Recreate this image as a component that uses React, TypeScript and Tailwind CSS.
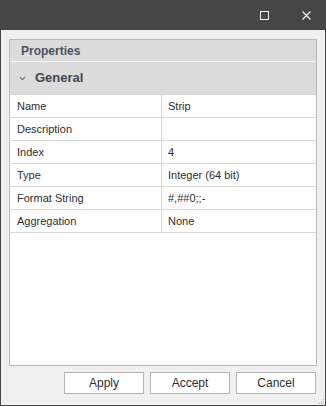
import { ChevronDown } from "lucide-react";

const rows = [
  { name: "Name", value: "Strip" },
  { name: "Description", value: "" },
  { name: "Index", value: "4" },
  { name: "Type", value: "Integer (64 bit)" },
  { name: "Format String", value: "#,##0;;-" },
  { name: "Aggregation", value: "None" },
];

export default function App() {
  return (
    <div
      className="relative w-[326px] h-[406px] flex flex-col bg-[#f0f0f0] border border-[#464646] text-[11px] text-[#2f2f2f]"
      style={{ fontFamily: '"Liberation Sans", Arial, sans-serif' }}
    >
      {/* title bar */}
      <div className="h-[29px] shrink-0 bg-[#464646] flex items-center justify-end pr-[14px] gap-[33px]">
        <div className="w-[9px] h-[9px] border border-[#f0f0f0]" />
        <svg width="9" height="9" viewBox="0 0 9 9" className="text-[#f0f0f0]">
          <path d="M0.5 0.5 L8.5 8.5 M8.5 0.5 L0.5 8.5" stroke="currentColor" strokeWidth="1.3" />
        </svg>
      </div>

      {/* body */}
      <div className="flex-1 flex flex-col px-[8px] pt-[9px] pb-[11px]">
        <div className="flex-1 flex flex-col bg-white border border-[#b9b9b9]">
          <div className="h-[22px] bg-[#dcdcdc] flex items-center pl-[11px] font-bold text-[12px] text-[#4a5260] border-b border-[#f4f4f4]">
            Properties
          </div>
          <div className="h-[33px] bg-[#dcdcdc] flex items-center pl-[8px] gap-[8px] font-bold text-[13px] text-[#3f4754] border-b border-[#d4d4d4]">
            <ChevronDown size={9} strokeWidth={3} className="text-[#6a6a6a]" />
            General
          </div>
          <div className="flex flex-col">
            {rows.map((r) => (
              <div key={r.name} className="h-[23px] flex border-b border-[#d9d9d9]">
                <div className="w-[152px] border-r border-[#d9d9d9] flex items-center pl-[7px]">{r.name}</div>
                <div className="flex-1 flex items-center pl-[6px]">{r.value}</div>
              </div>
            ))}
          </div>
        </div>

        <div className="flex justify-end gap-[6px] mt-[6px] pr-[1px]">
          {["Apply", "Accept", "Cancel"].map((b) => (
            <button
              key={b}
              className="w-[80px] h-[22px] bg-white border border-[#b4b4b4] text-[12px] text-[#2f2f2f] flex items-center justify-center"
            >
              {b}
            </button>
          ))}
        </div>
      </div>

      {/* resize grip */}
      <div className="absolute right-[1px] bottom-[1px] grid grid-cols-3 gap-[1px]">
        <span />
        <span />
        <span className="w-[1px] h-[1px] bg-[#a8a8a8]" />
        <span />
        <span className="w-[1px] h-[1px] bg-[#a8a8a8]" />
        <span className="w-[1px] h-[1px] bg-[#a8a8a8]" />
        <span className="w-[1px] h-[1px] bg-[#a8a8a8]" />
        <span className="w-[1px] h-[1px] bg-[#a8a8a8]" />
        <span className="w-[1px] h-[1px] bg-[#a8a8a8]" />
      </div>
    </div>
  );
}
